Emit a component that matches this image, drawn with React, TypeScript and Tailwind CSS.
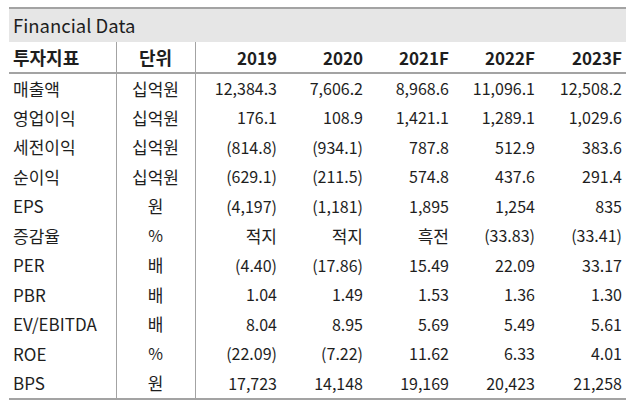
const years = ["2019", "2020", "2021F", "2022F", "2023F"];

const rows: { name: string; unit: string; values: string[] }[] = [
  { name: "매출액", unit: "십억원", values: ["12,384.3", "7,606.2", "8,968.6", "11,096.1", "12,508.2"] },
  { name: "영업이익", unit: "십억원", values: ["176.1", "108.9", "1,421.1", "1,289.1", "1,029.6"] },
  { name: "세전이익", unit: "십억원", values: ["(814.8)", "(934.1)", "787.8", "512.9", "383.6"] },
  { name: "순이익", unit: "십억원", values: ["(629.1)", "(211.5)", "574.8", "437.6", "291.4"] },
  { name: "EPS", unit: "원", values: ["(4,197)", "(1,181)", "1,895", "1,254", "835"] },
  { name: "증감율", unit: "%", values: ["적지", "적지", "흑전", "(33.83)", "(33.41)"] },
  { name: "PER", unit: "배", values: ["(4.40)", "(17.86)", "15.49", "22.09", "33.17"] },
  { name: "PBR", unit: "배", values: ["1.04", "1.49", "1.53", "1.36", "1.30"] },
  { name: "EV/EBITDA", unit: "배", values: ["8.04", "8.95", "5.69", "5.49", "5.61"] },
  { name: "ROE", unit: "%", values: ["(22.09)", "(7.22)", "11.62", "6.33", "4.01"] },
  { name: "BPS", unit: "원", values: ["17,723", "14,148", "19,169", "20,423", "21,258"] },
];

// Hangul glyphs are drawn a touch larger than the Latin digits
const isHangul = (s: string) => /[\uac00-\ud7a3]/.test(s);

export default function App() {
  return (
    <div
      className="w-[640px] h-[403px] bg-white pt-[7px] pl-[9px] text-[#1e1e1e]"
      style={{ fontFamily: '"Noto Sans CJK KR", "Noto Sans", sans-serif' }}
    >
      <div className="w-[617px] border-t-2 border-b-2 border-[#a3a3a3]">
        {/* Title bar */}
        <div className="h-[33px] bg-[#e6e6e6] flex items-center pl-1 text-[18.5px] leading-none">
          Financial Data
        </div>

        <table className="w-full table-fixed border-collapse text-[16px] leading-none">
          <colgroup>
            <col className="w-[107px]" />
            <col className="w-[79px]" />
            <col className="w-[86px]" />
            <col className="w-[86px]" />
            <col className="w-[86px]" />
            <col className="w-[86px]" />
            <col className="w-[87px]" />
          </colgroup>
          <thead>
            <tr className="h-[31px] border-b-2 border-[#a3a3a3]">
              <th className="text-left pl-1 border-r border-[#a3a3a3] font-bold text-[18px]">투자지표</th>
              <th className="text-center border-r border-[#a3a3a3] font-bold text-[18px]">단위</th>
              {years.map((y) => (
                <th key={y} className="text-right pr-1 font-bold text-[17px]">
                  {y}
                </th>
              ))}
            </tr>
          </thead>
          <tbody>
            {rows.map((r) => (
              <tr key={r.name} className="h-[29.5px]">
                <td className="text-left pl-1 border-r border-[#a3a3a3] whitespace-nowrap text-[17px]">
                  {r.name}
                </td>
                <td
                  className={
                    isHangul(r.unit)
                      ? "text-center border-r border-[#a3a3a3] text-[17px]"
                      : "text-center border-r border-[#a3a3a3]"
                  }
                >
                  {r.unit}
                </td>
                {r.values.map((v, i) => (
                  <td
                    key={i}
                    className={
                      isHangul(v)
                        ? "text-right pr-1 whitespace-nowrap text-[17px]"
                        : "text-right pr-1 whitespace-nowrap"
                    }
                  >
                    {v}
                  </td>
                ))}
              </tr>
            ))}
          </tbody>
        </table>
      </div>
    </div>
  );
}
